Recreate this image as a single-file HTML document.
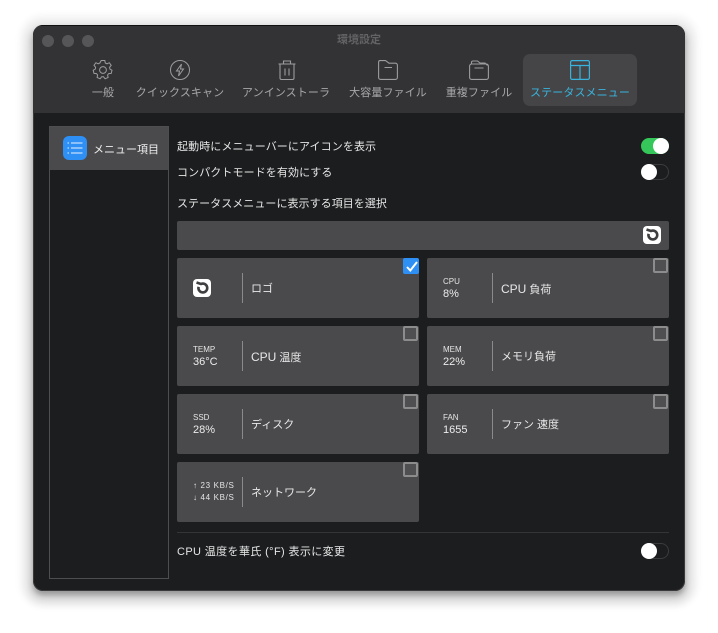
<!DOCTYPE html>
<html lang="ja"><head><meta charset="utf-8"><style>
*{box-sizing:border-box;margin:0;padding:0}
html,body{width:718px;height:633px;background:#fff;overflow:hidden;font-family:"Liberation Sans","Noto Sans CJK JP",sans-serif}
.abs,.win,.t,.card,.card *{position:absolute}
.t{white-space:nowrap;line-height:14px}
.shadow{position:absolute;left:33px;top:25px;width:652px;height:566px;border-radius:10px;box-shadow:0 4px 6px rgba(0,0,0,.28),0 6px 10px 4px rgba(0,0,0,.12),0 3px 8px 12px rgba(0,0,0,.06)}
.win{left:33px;top:25px;width:652px;height:566px;border-radius:10px;background:#1c1d1f;box-shadow:0 0 0 1px #3a3a3c inset;overflow:hidden}
.bar{position:absolute;left:0;top:0;width:652px;height:88px;background:#333335;border-top:1px solid #111}
.dot{position:absolute;top:9px;width:12px;height:12px;border-radius:50%;background:#565658}
.tab{color:#a8a8aa;font-size:11px;text-align:center;transform:translateX(-50%);top:60px;letter-spacing:.1px}
.main{color:#e6e6e6;font-size:11px;letter-spacing:.1px}
.card{width:242px;height:60px;background:#4a4a4c;border-radius:2px}
.card .div{left:65px;top:15px;width:1px;height:30px;background:#8a8a8b}
.card .box{right:1px;top:0;width:15px;height:15px;border:2px solid #8c8c8d;border-radius:2px;background:#4f4f51}
.card .l1{left:16px;top:19px;font-size:8px;line-height:10px;color:#e4e4e4;white-space:nowrap}
.card .l2{left:16px;top:30px;font-size:11px;line-height:12px;color:#ececec;white-space:nowrap}
.card .nm{left:74px;top:24px;font-size:11px;line-height:14px;color:#e8e8e8;white-space:nowrap}
.card .nm span{position:static;font-size:12px}
.logo{width:18px;height:18px;background:#fff;border-radius:4px}
.tg{position:absolute;width:28px;height:16px;border-radius:8px;border:1px solid #3c3c3e;background:#1c1d1f}
.tg i{position:absolute;left:-1px;top:-1px;width:16px;height:16px;border-radius:50%;background:#fff}
.tg.on{background:#35c759;border-color:#35c759}.tg.on i{left:11px}
svg{position:absolute;overflow:visible}
</style></head><body>
<div class="shadow"></div>
<div class="win">
<div class="bar">
<div class="dot" style="left:9px"></div><div class="dot" style="left:29px"></div><div class="dot" style="left:49px"></div>
<div class="t" style="left:0;width:652px;text-align:center;top:7px;font-size:11px;color:#636365;font-weight:bold">環境設定</div>
<div class="abs" style="left:490px;top:28px;width:114px;height:52px;border-radius:7px;background:#454547"></div>

<svg style="left:60px;top:34px" width="20" height="20" viewBox="0 0 20 20" fill="none" stroke="#9c9c9e" stroke-width="1"><circle cx="10" cy="10" r="3.4"/><path d="M8.2 0.5h3.6l.5 2.5 1.7.8 2.3-1.1 1.9 2.6-1.6 2 .3 1.7 2.1 1.2-.8 3.2-2.5.2-1.1 1.4.5 2.5-3 1.3-1.6-2h-1.8l-1.6 2-3-1.3.5-2.5-1.1-1.4-2.5-.2-.8-3.2 2.1-1.2.3-1.7-1.6-2 1.9-2.6 2.3 1.1 1.7-.8z"/></svg>
<svg style="left:137px;top:34px" width="20" height="20" viewBox="0 0 20 20" fill="none" stroke="#9c9c9e" stroke-width="1"><circle cx="10" cy="10" r="9.5"/><path d="M11.5 4 6.5 11h3l-1 5 5-7h-3z"/></svg>
<svg style="left:245px;top:34px" width="18" height="20" viewBox="0 0 18 20" fill="none" stroke="#9c9c9e" stroke-width="1.1"><path d="M.5 4h17M5.5 4V1h7v3M2 4v14a1.5 1.5 0 0 0 1.5 1.5h11A1.5 1.5 0 0 0 16 18V4M7 8.5v7M11 8.5v7"/></svg>
<svg style="left:345px;top:34px" width="20" height="20" viewBox="0 0 20 20" fill="none" stroke="#9c9c9e" stroke-width="1.1"><path d="M.6 2A1.5 1.5 0 0 1 2 .6h5.5L11 3.2h6.4a2 2 0 0 1 2 2v12.2a2 2 0 0 1-2 2H2.6a2 2 0 0 1-2-2zM6.5 7.5h7.5"/></svg>
<svg style="left:436px;top:34px" width="20" height="20" viewBox="0 0 20 20" fill="none" stroke="#9c9c9e" stroke-width="1.1"><path d="M.6 6a2 2 0 0 1 2-2h14.8a2 2 0 0 1 2 2v11.4a2 2 0 0 1-2 2H2.6a2 2 0 0 1-2-2zM2.5 4V2.5A1.5 1.5 0 0 1 4 1h4.5l2.5 2h5l2.5 2.5M5.5 8h9"/></svg>
<svg style="left:537px;top:34px" width="20" height="20" viewBox="0 0 20 20" fill="none" stroke="#38b3dc" stroke-width="1.2"><rect x=".6" y=".6" width="18.8" height="18.8" rx="1.5"/><path d="M.6 5.5h18.8M10 5.5v13.9"/></svg>

<div class="t tab" style="left:70px">一般</div>
<div class="t tab" style="left:147px">クイックスキャン</div>
<div class="t tab" style="left:253px">アンインストーラ</div>
<div class="t tab" style="left:355px">大容量ファイル</div>
<div class="t tab" style="left:446px">重複ファイル</div>
<div class="t tab" style="left:547px;color:#39b4dd">ステータスメニュー</div>
</div>

<div class="abs" style="left:16px;top:101px;width:120px;height:453px;border:1px solid #4e4e50"></div>
<div class="abs" style="left:17px;top:102px;width:118px;height:43px;background:#4a4a4c"></div>
<div class="abs" style="left:30px;top:111px;width:24px;height:24px;border-radius:6px;background:#2e8ff5"></div>
<svg style="left:34px;top:117px" width="16" height="12" viewBox="0 0 16 12" fill="none" stroke="#e8f2ff" stroke-width="1"><path d="M4 1h11.5M4 6h11.5M4 11h11.5M.5 1h1.5M.5 6h1.5M.5 11h1.5"/></svg>
<div class="t main" style="left:60px;top:118px;color:#eee;letter-spacing:0">メニュー項目</div>

<div class="t main" style="left:144px;top:115px">起動時にメニューバーにアイコンを表示</div>
<div class="t main" style="left:144px;top:141px">コンパクトモードを有効にする</div>
<div class="t main" style="left:144px;top:172px;letter-spacing:.05px">ステータスメニューに表示する項目を選択</div>
<div class="tg on" style="left:608px;top:113px"><i></i></div>
<div class="tg" style="left:608px;top:139px"><i></i></div>

<div class="abs" style="left:144px;top:196px;width:492px;height:29px;background:#4a4a4c;border-radius:2px"></div>
<div class="abs logo" style="left:610px;top:201px"></div>
<svg style="left:610px;top:201px" width="18" height="18" viewBox="0 0 18 18" fill="none" stroke="#3f3f41" stroke-width="2.6"><path d="M3.5 3.5 8 5A4.4 4.4 0 1 1 5.6 7.8"/></svg>

<div class="card" style="left:144px;top:233px"><div class="logo" style="left:16px;top:21px"></div>
<svg style="left:16px;top:21px" width="18" height="18" viewBox="0 0 18 18" fill="none" stroke="#3f3f41" stroke-width="2.6"><path d="M3.5 3.5 8 5A4.4 4.4 0 1 1 5.6 7.8"/></svg>
<div class="div"></div><div class="nm">ロゴ</div>
<div class="box" style="top:0;right:0;width:16px;height:16px;background:#2e8ff5;border:0"></div>
<svg style="left:229px;top:3px" width="12" height="11" viewBox="0 0 12 11" fill="none" stroke="#fff" stroke-width="2"><path d="M1 6l3.3 3.5L11 1"/></svg></div>
<div class="card" style="left:394px;top:233px"><div class="l1">CPU</div><div class="l2">8%</div><div class="div"></div><div class="nm"><span>CPU</span> 負荷</div><div class="box"></div></div>
<div class="card" style="left:144px;top:301px"><div class="l1">TEMP</div><div class="l2">36°C</div><div class="div"></div><div class="nm"><span>CPU</span> 温度</div><div class="box"></div></div>
<div class="card" style="left:394px;top:301px"><div class="l1">MEM</div><div class="l2">22%</div><div class="div"></div><div class="nm">メモリ負荷</div><div class="box"></div></div>
<div class="card" style="left:144px;top:369px"><div class="l1">SSD</div><div class="l2">28%</div><div class="div"></div><div class="nm">ディスク</div><div class="box"></div></div>
<div class="card" style="left:394px;top:369px"><div class="l1">FAN</div><div class="l2">1655</div><div class="div"></div><div class="nm">ファン 速度</div><div class="box"></div></div>
<div class="card" style="left:144px;top:437px"><div class="l1" style="top:19px;letter-spacing:.65px">↑ 23 KB/S</div><div class="l1" style="top:31px;letter-spacing:.65px">↓ 44 KB/S</div><div class="div"></div><div class="nm">ネットワーク</div><div class="box"></div></div>

<div class="abs" style="left:144px;top:507px;width:492px;height:1px;background:#343537"></div>
<div class="t main" style="left:144px;top:520px;letter-spacing:.38px">CPU 温度を華氏 (°F) 表示に変更</div>
<div class="tg" style="left:608px;top:518px"><i></i></div>
</div>
</body></html>
